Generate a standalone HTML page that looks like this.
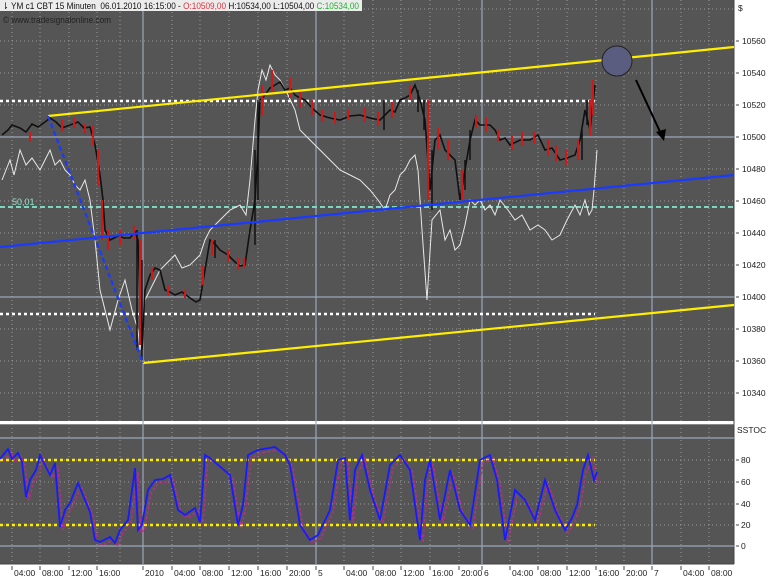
<!DOCTYPE html>
<html><head><meta charset="utf-8"><style>
html,body{margin:0;padding:0;background:#fff;}
svg{display:block;font-family:"Liberation Sans",sans-serif;}
</style></head><body>
<svg width="770" height="578" viewBox="0 0 770 578" xmlns="http://www.w3.org/2000/svg">
<rect x="0" y="0" width="770" height="578" fill="#fff"/>
<rect x="0" y="0" width="734" height="421" fill="#555"/>
<rect x="0" y="425" width="734" height="139" fill="#555"/>
<line x1="0" y1="422.5" x2="734" y2="422.5" stroke="#fff" stroke-width="1"/>
<line x1="0" y1="424.5" x2="734" y2="424.5" stroke="#888" stroke-width="1"/>
<line x1="734" y1="0" x2="734" y2="564" stroke="#444"/>
<line x1="0" y1="564" x2="734" y2="564" stroke="#444"/>
<g stroke="#9a9a9a" stroke-dasharray="1,3" stroke-width="1">
<path d="M12 0V564M40 0V564M69 0V564M97 0V564M120 0V564M172 0V564M200 0V564M229 0V564M258 0V564M287 0V564M344 0V564M373 0V564M401 0V564M430 0V564M459 0V564M510 0V564M538 0V564M567 0V564M596 0V564M624 0V564M681 0V564M709 0V564"/>
<path d="M0 9H734M0 41H734M0 73H734M0 105H734M0 169H734M0 201H734M0 233H734M0 265H734M0 329H734M0 361H734M0 393H734"/>
<path d="M0 482H734M0 504H734M0 460H734M0 525H734"/>
</g>
<g stroke="#9aa6bc" stroke-width="1.2">
<path d="M143 0V564M316 0V564M482 0V564M652 0V564"/>
<path d="M0 137H734M0 297H734M0 438H734M0 546H734"/>
</g>
<g stroke-width="2.5" stroke-dasharray="3,3">
<line x1="0" y1="101" x2="595" y2="101" stroke="#fff"/>
<line x1="0" y1="314" x2="595" y2="314" stroke="#fff"/>
<line x1="0" y1="460" x2="595" y2="460" stroke="#ffee00"/>
<line x1="0" y1="525" x2="595" y2="525" stroke="#ffee00"/>
</g>
<line x1="0" y1="207" x2="734" y2="207" stroke="#7fd6c0" stroke-width="2" stroke-dasharray="5,3"/>
<text x="12" y="205" font-size="9" fill="#8fe0c8">50,01</text>
<polyline fill="none" stroke="#e8e8e8" stroke-width="1" points="2,180 6,170 10,160 14,175 20,150 26,165 32,158 40,170 45,160 50,150 55,165 60,160 65,170 70,175 75,185 80,190 85,180 90,200 95,240 100,290 105,310 110,330 118,300 125,280 132,310 138,330 140,350 145,300 150,290 160,270 168,262 175,255 182,268 190,265 200,255 205,240 210,230 220,220 230,210 240,205 246,215 250,180 255,120 258,90 262,70 266,80 270,65 275,75 280,80 288,95 295,110 300,130 310,140 320,150 330,160 340,170 350,175 360,180 370,190 378,200 385,210 390,195 395,190 400,175 405,170 410,160 415,155 418,170 422,230 427,300 432,220 440,210 445,240 450,230 455,250 460,245 465,225 470,200 475,205 480,200 485,210 490,205 495,215 500,200 508,210 515,220 522,215 530,230 538,225 545,230 552,240 560,235 567,220 575,205 580,215 585,200 589,215 592,210 594,190 597,150"/>
<polyline fill="none" stroke="#111" stroke-width="1.6" points="2,135 8,130 12,125 20,128 26,132 32,124 38,127 45,122 50,118 56,122 62,128 70,125 78,122 84,128 90,127 95,145 100,175 103,200 105,230 110,240 118,236 124,238 130,238 135,232 138,240 142,350 145,290 150,275 155,268 160,270 165,290 170,292 175,295 182,292 190,298 196,302 200,300 205,270 210,240 215,244 220,250 228,255 235,262 240,266 245,265 250,230 255,200 258,150 260,100 265,95 270,88 275,85 280,82 285,90 290,88 295,95 300,98 305,100 312,108 320,115 330,118 340,120 350,116 360,115 370,118 380,120 385,115 390,110 395,112 400,100 405,98 410,95 415,85 420,100 425,120 430,190 433,160 435,140 440,135 445,150 450,155 455,160 460,200 465,170 470,140 475,120 480,125 490,125 495,130 500,140 505,138 510,145 520,140 530,140 538,135 545,150 552,148 560,160 567,158 575,155 580,140 585,110 590,130 595,85"/>
<g stroke="#d01818" stroke-width="2">
<path d="M30 132V142M62 120V132M74 118V128M85 124V134M93 125V145M98 150V185M102 200V240M108 230V250M120 230V245M134 225V240M140 240V345M152 268V280M168 285V295M185 290V298M203 265V285M212 240V255M228 250V262M238 258V270M244 258V268M262 85V115M272 70V92M290 78V98M300 90V108M312 100V115M322 110V122M335 112V124M348 110V120M365 108V122M378 112V126M392 102V118M410 86V100M428 100V200M438 128V150M448 140V160M462 170V200M476 115V128M486 118V132M498 130V142M512 136V150M522 132V146M534 132V144M548 140V156M556 145V162M566 150V166M578 140V160M590 100V135M593 80V115"/>
</g>
<g stroke="#111" stroke-width="1.5">
<path d="M137 230V350M142 260V360M215 240V258M255 150V245M258 100V200M384 100V130M418 90V112M424 100V130M432 150V210M465 160V190M470 130V160M582 130V160M587 100V125"/>
</g>
<line x1="48" y1="116" x2="734" y2="47" stroke="#ffee00" stroke-width="2.2"/>
<line x1="143" y1="363" x2="734" y2="305" stroke="#ffee00" stroke-width="2.2"/>
<line x1="0" y1="247" x2="734" y2="175" stroke="#1a3aff" stroke-width="2.2"/>
<line x1="48" y1="116" x2="143" y2="363" stroke="#1a3aff" stroke-width="2.2" stroke-dasharray="5,3"/>
<circle cx="617" cy="61" r="15" fill="#5a5c80" stroke="#222" stroke-width="1"/>
<line x1="636" y1="80" x2="662" y2="136" stroke="#000" stroke-width="2"/>
<path d="M656 132 L664 141 L666 129 Z" fill="#000"/>
<polyline fill="none" stroke="#b0308a" stroke-width="1.6" stroke-dasharray="3,2" transform="translate(3,3)" points="0,459 8,449 12,459 18,453 22,462 26,497 30,480 36,470 40,455 45,465 50,475 55,463 60,527 65,510 70,503 78,483 85,500 90,512 95,540 100,542 110,537 115,543 120,530 128,520 135,468 138,530 142,525 148,490 155,480 163,479 170,475 178,510 185,515 195,508 200,522 205,455 210,458 218,465 230,475 238,525 243,505 248,455 258,450 275,447 285,455 290,465 300,525 310,540 318,535 330,510 338,460 345,458 350,520 355,470 362,455 370,490 380,520 390,465 400,455 410,470 420,540 425,480 430,460 440,520 450,470 460,510 470,525 480,460 490,455 497,480 505,540 515,490 525,500 535,520 545,480 555,510 565,530 572,518 577,505 583,470 590,455 594,478 597,480"/>
<polyline fill="none" stroke="#1a1aff" stroke-width="1.8" points="0,459 8,449 12,459 18,453 22,462 26,497 30,480 36,470 40,455 45,465 50,475 55,463 60,527 65,510 70,503 78,483 85,500 90,512 95,540 100,542 110,537 115,543 120,530 128,520 135,468 138,530 142,525 148,490 155,480 163,479 170,475 178,510 185,515 195,508 200,522 205,455 210,458 218,465 230,475 238,525 243,505 248,455 258,450 275,447 285,455 290,465 300,525 310,540 318,535 330,510 338,460 345,458 350,520 355,470 362,455 370,490 380,520 390,465 400,455 410,470 420,540 425,480 430,460 440,520 450,470 460,510 470,525 480,460 490,455 497,480 505,540 515,490 525,500 535,520 545,480 555,510 565,530 572,518 577,505 583,470 588,455 594,480 597,472"/>
<rect x="0" y="0" width="362" height="11" fill="#ececec"/>
<text x="2" y="9" font-size="9" fill="#111" textLength="357" lengthAdjust="spacingAndGlyphs">⇂ YM c1 CBT 15 Minuten&#160; 06.01.2010 16:15:00 - <tspan fill="#e0303a">O:10509,00</tspan> H:10534,00 L:10504,00 <tspan fill="#20b030">C:10534,00</tspan></text>
<text x="3" y="23" font-size="9" fill="#222" textLength="108" lengthAdjust="spacingAndGlyphs">© www.tradesignalonline.com</text>
<g font-size="8.5" fill="#222">
<text x="738" y="11">$</text>
<text x="742" y="44">10560</text><text x="742" y="76">10540</text><text x="742" y="108">10520</text><text x="742" y="140">10500</text><text x="742" y="172">10480</text><text x="742" y="204">10460</text><text x="742" y="236">10440</text><text x="742" y="268">10420</text><text x="742" y="300">10400</text><text x="742" y="332">10380</text><text x="742" y="364">10360</text><text x="742" y="396">10340</text>
<text x="737" y="433">SSTOC</text>
<text x="741" y="463">80</text><text x="741" y="485">60</text><text x="741" y="507">40</text><text x="741" y="528">20</text><text x="741" y="549">0</text>
</g>
<g stroke="#444" stroke-width="1">
<path d="M736 41H739M736 73H739M736 105H739M736 137H739M736 169H739M736 201H739M736 233H739M736 265H739M736 297H739M736 329H739M736 361H739M736 393H739M736 460H739M736 482H739M736 504H739M736 525H739M736 546H739"/>
<path d="M12 566V570M40 566V570M69 566V570M97 566V570M143 566V570M172 566V570M200 566V570M229 566V570M258 566V570M287 566V570M316 566V570M344 566V570M373 566V570M401 566V570M430 566V570M459 566V570M482 566V570M510 566V570M538 566V570M567 566V570M596 566V570M624 566V570M652 566V570M681 566V570M709 566V570"/>
</g>
<g font-size="8.5" fill="#222">
<text x="14" y="576">04:00</text><text x="42" y="576">08:00</text><text x="71" y="576">12:00</text><text x="99" y="576">16:00</text>
<text x="145" y="576">2010</text><text x="174" y="576">04:00</text><text x="202" y="576">08:00</text><text x="231" y="576">12:00</text><text x="260" y="576">16:00</text><text x="289" y="576">20:00</text>
<text x="318" y="576">5</text><text x="346" y="576">04:00</text><text x="375" y="576">08:00</text><text x="403" y="576">12:00</text><text x="432" y="576">16:00</text><text x="461" y="576">20:00</text>
<text x="484" y="576">6</text><text x="512" y="576">04:00</text><text x="540" y="576">08:00</text><text x="569" y="576">12:00</text><text x="598" y="576">16:00</text><text x="626" y="576">20:00</text>
<text x="654" y="576">7</text><text x="683" y="576">04:00</text><text x="711" y="576">08:00</text>
</g>
</svg>
</body></html>
